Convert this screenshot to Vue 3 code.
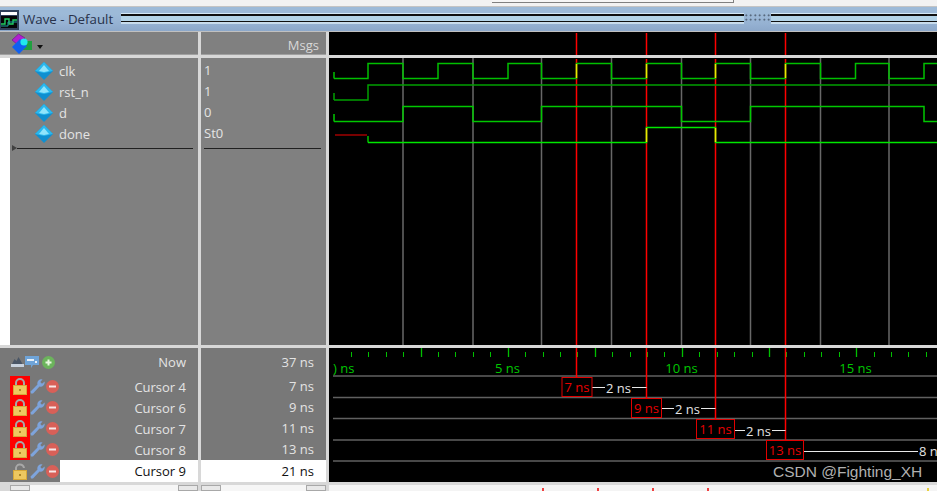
<script setup>
const signals = [
  { name: 'clk', value: '1' },
  { name: 'rst_n', value: '1' },
  { name: 'd', value: '0' },
  { name: 'done', value: 'St0' }
]

const cursors = [
  { name: 'Cursor 4', time: '7 ns', locked: true },
  { name: 'Cursor 6', time: '9 ns', locked: true },
  { name: 'Cursor 7', time: '11 ns', locked: true },
  { name: 'Cursor 8', time: '13 ns', locked: true },
  { name: 'Cursor 9', time: '21 ns', locked: false }
]

const gridLines = [403, 473, 541.5, 611.5, 681.5, 750.5, 820.5, 889]
const cursorLines = [576.5, 646.5, 715.5, 785.5]

// builds a square wave from the x positions where it toggles
function wave(startX, endX, low, high, startHigh, toggles) {
  let level = startHigh
  let d = `M${startX} ${level ? high : low}`
  for (const x of toggles) {
    d += ` H${x}`
    level = !level
    d += ` V${level ? high : low}`
  }
  return d + ` H${endX}`
}

const clkToggles = [368, 403, 438, 473, 508, 541.5, 576.5, 611.5, 646.5, 681.5, 715.5, 750.5, 785.5, 820.5, 855.5, 889, 924]
const waves = [
  { d: 'M334 72 V78.5 ' + wave(334, 937, 78.5, 63.5, false, clkToggles), color: '#00c000' },
  { d: 'M334 93 V100 ' + wave(334, 937, 100, 85, false, [368]), color: '#00a000' },
  { d: 'M334 114 V121.5 ' + wave(334, 937, 121.5, 106.5, false, [403, 473, 541.5, 681.5, 750.5, 924]), color: '#00c800' },
  { d: wave(368, 937, 142.5, 127.5, false, [646.5, 715.5]), color: '#00e800' }
]

const yellowEdges = [
  { x: 576.5, y1: 64, y2: 78 },
  { x: 646.5, y1: 64, y2: 78 },
  { x: 715.5, y1: 64, y2: 78 },
  { x: 785.5, y1: 64, y2: 78 },
  { x: 646.5, y1: 128, y2: 142 },
  { x: 715.5, y1: 128, y2: 142 }
]

const ticks = []
for (let i = 1; i <= 34; i++) {
  const x = 333.5 + i * 17.42
  ticks.push({ x: Math.round(x) + 0.5, major: i % 5 === 0 })
}

const rulerLabels = [
  { x: 507.5, text: '5 ns' },
  { x: 681.5, text: '10 ns' },
  { x: 855.5, text: '15 ns' }
]

const rowLines = [376, 397.5, 418.5, 440, 461]

const markers = [
  { x: 562, y: 377.5, w: 30, h: 19, text: '7 ns' },
  { x: 631.5, y: 398.5, w: 30, h: 19, text: '9 ns' },
  { x: 696.5, y: 419.5, w: 38, h: 19, text: '11 ns' },
  { x: 766.5, y: 440.5, w: 37, h: 19, text: '13 ns' }
]

const deltas = [
  { y: 387.5, x1: 592, x2: 605, x3: 632, x4: 646.5, tx: 618.5, text: '2 ns' },
  { y: 408.5, x1: 662, x2: 674, x3: 701, x4: 715.5, tx: 687.5, text: '2 ns' },
  { y: 430.5, x1: 735, x2: 745, x3: 772, x4: 785.5, tx: 758.5, text: '2 ns' }
]

const scrollMarks = [
  { x: 542, color: '#f04040' },
  { x: 597, color: '#f04040' },
  { x: 652, color: '#f04040' },
  { x: 707, color: '#f04040' },
  { x: 927, color: '#e8d040' }
]
</script>

<template>
  <div class="window">
    <div class="top-strip"><div class="top-box"></div></div>

    <div class="title-bar">
      <svg class="title-icon" width="19" height="20" viewBox="0 0 19 20">
        <rect x="0" y="0" width="19" height="20" fill="#30405a" />
        <rect x="1" y="2" width="16" height="3" fill="#ffffff" />
        <rect x="1" y="6" width="16" height="12" fill="#050505" />
        <path d="M1 14 H5 V9 H9 V14 H13 V10 H17" fill="none" stroke="#20d060" stroke-width="1.4" />
        <path d="M1 16 H8 V12 H17" fill="none" stroke="#20a0a0" stroke-width="1" />
      </svg>
      <span class="title-text">Wave - Default</span>
      <div class="grip"></div>
      <div class="grip-dots"></div>
      <div class="grip grip-end"></div>
    </div>

    <div class="panes">
      <div class="head names-head">
        <svg class="group-icon" width="34" height="23" viewBox="0 32 34 23">
          <path d="M12 40 L18.5 34 L25 38 L18 45 Z" fill="#b020d0" stroke="#6a1080" stroke-width="0.6" />
          <rect x="22" y="41" width="10" height="9" fill="#20a040" />
          <path d="M12 47 L20 39 L27 46 L19 54 Z" fill="#1060f0" />
          <circle cx="24" cy="42" r="3.6" fill="#20e8f0" />
        </svg>
        <span class="drop-arrow"></span>
      </div>
      <div class="head msgs-head">Msgs</div>
      <svg class="wave-svg" width="608" height="23" viewBox="329 32 608 23">
        <line v-for="x in cursorLines" :key="x" :x1="x" :x2="x" y1="33" y2="55" stroke="#ff0000" stroke-width="1.5" />
      </svg>

      <div class="names-body">
        <div class="names-list">
          <div v-for="s in signals" :key="s.name" class="signal-row">
            <svg class="diamond" width="18" height="18" viewBox="0 0 18 18">
              <path d="M9 0 L18 9 L9 18 L0 9 Z" fill="#0f8fd0" />
              <path d="M9 0 L18 9 L9 11 L0 9 Z" fill="#2ab8ee" />
              <path d="M9 3 L14 9 L9 10 L4 9 Z" fill="#8fe4fb" />
            </svg>
            <span>{{ s.name }}</span>
          </div>
          <div class="divider-row">
            <span class="divider-mark"></span>
            <span class="divider-line"></span>
          </div>
        </div>
      </div>
      <div class="msgs-body">
        <div v-for="s in signals" :key="s.name" class="msg-row">{{ s.value }}</div>
        <div class="msg-line"></div>
      </div>
      <svg class="wave-svg" width="608" height="287" viewBox="329 58 608 287">
        <line v-for="x in gridLines" :key="x" :x1="x" :x2="x" y1="58" y2="345" stroke="#686868" stroke-width="1.5" />
        <line v-for="x in cursorLines" :key="x" :x1="x" :x2="x" y1="59" y2="345" stroke="#ff0000" stroke-width="1.5" />
        <path d="M335 135 H367" stroke="#a00000" stroke-width="1.5" fill="none" />
        <path d="M368 136 V142.5" stroke="#00c000" fill="none" stroke-width="1.5" />
        <path v-for="w in waves" :key="w.d" :d="w.d" :stroke="w.color" fill="none" stroke-width="1.5" />
        <line v-for="(e, i) in yellowEdges" :key="i" :x1="e.x" :x2="e.x" :y1="e.y1" :y2="e.y2" stroke="#e8e800" stroke-width="1.5" />
      </svg>

      <div class="cursor-names">
        <div class="now-row">
          <div class="now-icons">
            <svg width="13" height="12" viewBox="0 0 13 12">
              <path d="M1 8 L3.5 3 L5.5 5 L7.5 1 L11.5 8 Z" fill="#4a5666" />
              <rect x="0" y="8" width="13" height="3" fill="#c8d2de" />
            </svg>
            <svg width="14" height="14" viewBox="0 0 14 14">
              <path d="M0 1 H14 V10 H8 L6 13 L6 10 H0 Z" fill="#6fa4d8" />
              <rect x="2" y="4" width="7" height="2" fill="#e8f0f8" />
              <rect x="10" y="6" width="2" height="2" fill="#e8f0f8" />
            </svg>
            <svg width="13" height="13" viewBox="0 0 13 13">
              <circle cx="6.5" cy="6.5" r="6.5" fill="#6cb45c" />
              <path d="M3.5 6.5 H9.5 M6.5 3.5 V9.5" stroke="#e8f8e0" stroke-width="2" />
            </svg>
          </div>
          <span class="now-label">Now</span>
        </div>
        <div v-for="c in cursors" :key="c.name" class="cursor-row" :class="{ active: !c.locked }">
          <div class="cursor-icons">
            <div class="lock-cell" :class="{ locked: c.locked }">
              <svg width="14" height="17" viewBox="0 0 14 17">
                <path v-if="c.locked" d="M3 8 V5 A4 4 0 0 1 11 5 V8" fill="none" stroke="#a8a8a8" stroke-width="2" />
                <path v-else d="M3 8 V6 A4 4 0 0 1 11 5" fill="none" stroke="#a8a8a8" stroke-width="2" />
                <rect x="0.5" y="7.5" width="13" height="9" fill="#eec860" stroke="#d8a838" />
                <rect x="6" y="11" width="2" height="2" fill="#b08828" />
              </svg>
            </div>
            <svg class="wrench" width="15" height="15" viewBox="0 0 15 15">
              <path d="M0.5 12.5 L7.5 5.5 A4 4 0 0 1 12.5 0.5 L10.3 3 L12 4.8 L14.6 2.6 A4.2 4.2 0 0 1 9.5 7.5 L3 14.5 L1 14.5 Z" fill="#7ea4dc" />
            </svg>
            <svg class="stop" width="13" height="13" viewBox="0 0 13 13">
              <circle cx="6.5" cy="6.5" r="6.5" fill="#d86058" />
              <rect x="3" y="5.5" width="7" height="2" fill="#f8e8e8" />
            </svg>
          </div>
          <span class="cursor-name">{{ c.name }}</span>
        </div>
      </div>
      <div class="cursor-times">
        <div class="now-row time-now">37 ns</div>
        <div v-for="c in cursors" :key="c.name" class="time-row" :class="{ active: !c.locked }">{{ c.time }}</div>
      </div>
      <svg class="wave-svg" width="608" height="134" viewBox="329 348 608 134">
        <line
          v-for="(t, i) in ticks"
          :key="i"
          :x1="t.x"
          :x2="t.x"
          :y1="t.major ? 348 : 352"
          y2="357"
          stroke="#00c000"
          :stroke-width="t.major ? 1.3 : 1"
        />
        <text x="333" y="373" class="ruler-text">) ns</text>
        <text v-for="l in rulerLabels" :key="l.text" :x="l.x" y="373" text-anchor="middle" class="ruler-text">{{ l.text }}</text>
        <line v-for="y in rowLines" :key="y" x1="333" x2="937" :y1="y" :y2="y" stroke="#606060" stroke-width="1.3" />
        <line x1="576.5" x2="576.5" y1="348" y2="377" stroke="#ff0000" stroke-width="1.5" />
        <line x1="646.5" x2="646.5" y1="348" y2="398" stroke="#ff0000" stroke-width="1.5" />
        <line x1="715.5" x2="715.5" y1="348" y2="419" stroke="#ff0000" stroke-width="1.5" />
        <line x1="785.5" x2="785.5" y1="348" y2="440" stroke="#ff0000" stroke-width="1.5" />
        <g v-for="d in deltas" :key="d.y">
          <path :d="`M${d.x1} ${d.y} H${d.x2} M${d.x3} ${d.y} H${d.x4}`" stroke="#e8e8e8" fill="none" />
          <text :x="d.tx" :y="d.y + 5" text-anchor="middle" class="delta-text">{{ d.text }}</text>
        </g>
        <path d="M804 451.5 H918" stroke="#e8e8e8" fill="none" />
        <text x="919" y="456" class="delta-text">8 ns</text>
        <g v-for="m in markers" :key="m.text">
          <rect :x="m.x" :y="m.y" :width="m.w" :height="m.h" fill="#000" stroke="#e00000" />
          <text :x="m.x + m.w / 2" :y="m.y + 14" text-anchor="middle" class="marker-text">{{ m.text }}</text>
        </g>
        <text x="773" y="477" class="mark-text">CSDN @Fighting_XH</text>
      </svg>
    </div>

    <div class="scrollbars">
      <div class="bar bar-names">
        <span class="arrow-btn"></span><span class="track"></span><span class="arrow-btn"></span>
      </div>
      <div class="bar bar-msgs">
        <span class="arrow-btn"></span><span class="track"></span><span class="arrow-btn"></span>
      </div>
      <div class="bar bar-wave">
        <span
          v-for="m in scrollMarks"
          :key="m.x"
          class="scroll-mark"
          :style="{ left: m.x - 329 + 'px', background: m.color }"
        ></span>
      </div>
    </div>
  </div>
</template>

<style scoped>
.window {
  width: 937px;
  height: 491px;
  overflow: hidden;
  background: #d8d8d8;
  font-family: "Open Sans", "Liberation Sans", sans-serif;
  font-size: 13px;
  color: #e4e4e4;
}

.top-strip {
  height: 6px;
  background: #f2f2f2;
  border-bottom: 1px solid #c4c4c4;
  position: relative;
}

.top-box {
  position: absolute;
  left: 492px;
  top: 0;
  width: 241px;
  height: 2px;
  background: #f6f6f6;
  border-bottom: 1px solid #808080;
  border-right: 1px solid #808080;
}

.title-bar {
  height: 24px;
  display: flex;
  align-items: center;
  background: linear-gradient(#9dbad8 0 7px, #95b1d2 17px, #8ca8ca 24px);
  border-bottom: 1px solid #c0c0c0;
}

.title-icon {
  flex: none;
  margin-top: 1px;
}

.title-text {
  margin-left: 4px;
  width: 98px;
  flex: none;
  color: #28324a;
  font-size: 13.3px;
}

.grip {
  width: 623px;
  flex: none;
  height: 10px;
  margin-top: -2px;
  border-top: 1px solid #d4e8f6;
  background: linear-gradient(#101010 0 2px, #b4d4e8 2px 7px, #101010 7px 8px, #c8dcec 8px 10px);
}

.grip-dots {
  width: 27px;
  flex: none;
  height: 10px;
  margin-top: -2px;
  background: radial-gradient(#3c4a5c 0.8px, transparent 1px) 0 0 / 4.5px 4.5px;
}

.grip-end {
  width: 166px;
}

.panes {
  display: grid;
  grid-template-columns: 198px 125px 608px;
  grid-template-rows: 23px 287px 134px;
  column-gap: 3px;
  row-gap: 3px;
  background: #d8d8d8;
}

.head {
  background: #808080;
  border-bottom: 1px solid #a0a0a0;
}

.names-head {
  display: flex;
  align-items: center;
}

.group-icon {
  flex: none;
}

.drop-arrow {
  width: 0;
  height: 0;
  margin: 8px 0 0 3px;
  border-left: 3.5px solid transparent;
  border-right: 3.5px solid transparent;
  border-top: 4px solid #101010;
}

.msgs-head {
  text-align: right;
  padding-right: 7px;
  line-height: 26px;
  color: #d8d8d8;
}

.wave-svg {
  display: block;
  background: #000;
}

.names-body {
  background: #fff;
  padding-left: 10px;
}

.names-list {
  height: 100%;
  background: #808080;
  padding-top: 2px;
  box-sizing: border-box;
}

.signal-row {
  height: 21px;
  display: flex;
  align-items: center;
  padding-left: 25px;
  gap: 6px;
}

.divider-row {
  display: flex;
  align-items: center;
  height: 4px;
  margin-top: 2px;
}

.divider-mark {
  width: 0;
  height: 0;
  margin-left: 2px;
  border-left: 5px solid #404040;
  border-top: 3px solid transparent;
  border-bottom: 3px solid transparent;
}

.divider-line {
  width: 176px;
  height: 1px;
  background: #202020;
}

.msgs-body {
  background: #808080;
  padding: 2px 0 0 3px;
}

.msg-row {
  height: 21px;
  line-height: 21px;
}

.msg-line {
  width: 117px;
  height: 1px;
  margin-top: 4px;
  background: #202020;
}

.cursor-names,
.cursor-times {
  background: #787878;
}

.now-row {
  height: 28px;
  display: flex;
  align-items: center;
}

.now-icons {
  display: flex;
  align-items: center;
  gap: 1px;
  padding-left: 11px;
}

.now-icons svg:last-child {
  margin-left: 2px;
}

.now-label {
  margin-left: auto;
  padding-right: 12px;
}

.cursor-row {
  height: 21px;
  display: flex;
  align-items: center;
}

.cursor-icons {
  width: 60px;
  flex: none;
  height: 100%;
  display: flex;
  align-items: center;
  padding-left: 10px;
  box-sizing: border-box;
  background: #787878;
}

.lock-cell {
  width: 20px;
  height: 100%;
  display: flex;
  align-items: center;
  justify-content: center;
  flex: none;
}

.lock-cell.locked {
  background: #ff0000;
}

.wrench {
  flex: none;
}

.stop {
  margin-left: 1px;
  flex: none;
}

.cursor-name {
  margin-left: auto;
  padding-right: 12px;
}

.cursor-row.active {
  height: 22px;
  background: #fff;
  color: #101010;
}

.time-now {
  justify-content: flex-end;
  padding-right: 12px;
}

.time-row {
  height: 21px;
  line-height: 21px;
  text-align: right;
  padding-right: 12px;
}

.time-row.active {
  height: 22px;
  line-height: 22px;
  background: #fff;
  color: #101010;
}

.ruler-text {
  fill: #00c800;
  font-size: 13px;
}

.delta-text {
  fill: #e4e4e4;
  font-size: 13px;
}

.marker-text {
  fill: #e80000;
  font-size: 13px;
}

.mark-text {
  fill: #b0b0b0;
  font-size: 15.5px;
  font-family: "Liberation Sans", sans-serif;
}

.scrollbars {
  display: grid;
  grid-template-columns: 198px 125px 608px;
  column-gap: 3px;
  margin-top: 3px;
  height: 6px;
}

.bar {
  display: flex;
  position: relative;
  background: #f4f4f4;
  overflow: hidden;
}

.bar-names {
  padding-left: 10px;
  background: #d8d8d8;
}

.arrow-btn {
  width: 20px;
  flex: none;
  background: #e8e8e8;
  border: 1px solid #a8a8a8;
  box-sizing: border-box;
}

.track {
  flex: 1;
  background: #f6f6f6;
}

.scroll-mark {
  position: absolute;
  top: 3px;
  width: 2px;
  height: 3px;
}
</style>

<style>
html,
body {
  background: #fff;
  overflow: hidden;
}
</style>
